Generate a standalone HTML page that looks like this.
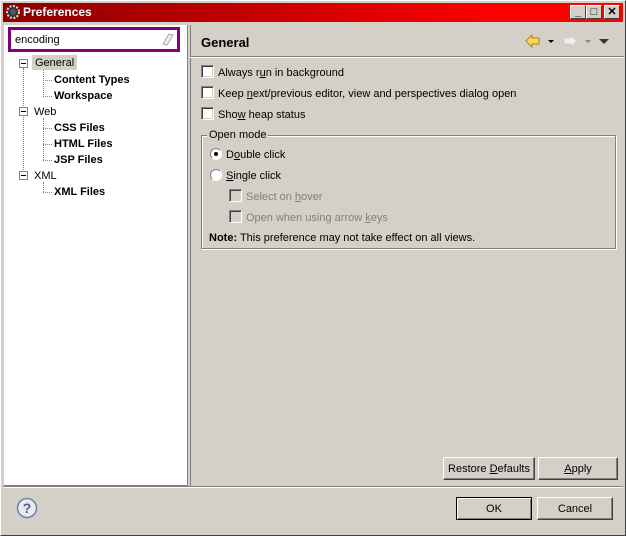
<!DOCTYPE html>
<html><head><style>
*{margin:0;padding:0;box-sizing:border-box}
body{width:626px;height:536px;background:#d4d0c8;font-family:"Liberation Sans",sans-serif;font-size:11px;color:#000;position:relative;overflow:hidden}
.a{position:absolute}
.win{left:0;top:0;width:626px;height:536px;border:1px solid #fff;border-right-color:#404040;border-bottom-color:#404040;outline:1px solid #d4d0c8}
.title{left:3px;top:3px;width:620px;height:19px;background:linear-gradient(to right,#8a0000,#ff0000 80%,#ff0000);color:#fff;font-weight:bold;font-size:12px;line-height:19px;padding-left:20px}
.tb{top:5px;width:16px;height:14px;background:#d4d0c8;border:1px solid #fff;border-right-color:#404040;border-bottom-color:#404040;font-size:11px;line-height:12px;text-align:center;font-weight:bold;color:#000}
.left{left:4px;top:25px;width:184px;height:461px;background:#fff;border-right:1px solid #808080;border-bottom:1px solid #808080}
.srch{left:8px;top:27px;width:172px;height:25px;border:3px solid #800080;background:#fff;padding:4px 0 0 4px;font-size:11px}
.t{position:absolute;white-space:nowrap;padding-top:2px}
.b{font-weight:bold}
.pm{position:absolute;width:9px;height:9px;border:1px solid #808080;background:#fff}
.pm:after{content:"";position:absolute;left:1px;top:3px;width:5px;height:1px;background:#000}
.dv{position:absolute;border-left:1px dotted #808080}
.dh{position:absolute;border-top:1px dotted #808080}
.cb{position:absolute;width:13px;height:13px;background:#fff;border:1px solid #808080;border-right-color:#fff;border-bottom-color:#fff;box-shadow:inset 1px 1px 0 #404040,inset -1px -1px 0 #d4d0c8}
.cb.dis{background:#d4d0c8}
.rb{position:absolute;width:12px;height:12px;border-radius:50%;background:#fff;border:1px solid #808080;border-right-color:#fff;border-bottom-color:#fff}
.dis{color:#808080}
.btn{position:absolute;height:23px;background:#d4d0c8;border:1px solid #fff;border-right-color:#404040;border-bottom-color:#404040;box-shadow:inset -1px -1px 0 #808080;text-align:center;line-height:22px}
u{text-decoration:underline}
</style></head><body>
<div class="a win"></div>
<div class="a title">Preferences</div>
<svg class="a" style="left:5px;top:4px" width="16" height="16"><circle cx="8" cy="8" r="6" fill="#333" stroke="#ddd" stroke-width="2" stroke-dasharray="2 1.5"/><circle cx="8" cy="8" r="3" fill="#556"/></svg>
<div class="a tb" style="left:570px">_</div>
<div class="a tb" style="left:586px">□</div>
<div class="a tb" style="left:604px">✕</div>

<div class="a left"></div>
<div class="a srch">encoding</div>
<svg class="a" style="left:160px;top:32px" width="14" height="14"><path d="M3 12 L9 2 L13 3 L7 13 Z" fill="#eee" stroke="#aaa"/></svg>

<div class="dv" style="left:23px;top:68px;height:108px"></div>
<div class="pm" style="left:19px;top:59px"></div>
<div class="t" style="left:32px;top:55px;background:#d4d0c8;padding:2px 3px 1px">General</div>
<div class="dv" style="left:43px;top:70px;height:25px"></div>
<div class="dh" style="left:43px;top:80px;width:9px"></div>
<div class="dh" style="left:43px;top:96px;width:9px"></div>
<div class="t b" style="left:54px;top:72px">Content Types</div>
<div class="t b" style="left:54px;top:88px">Workspace</div>
<div class="pm" style="left:19px;top:107px"></div>
<div class="t" style="left:34px;top:104px">Web</div>
<div class="dv" style="left:43px;top:118px;height:42px"></div>
<div class="dh" style="left:43px;top:128px;width:9px"></div>
<div class="dh" style="left:43px;top:144px;width:9px"></div>
<div class="dh" style="left:43px;top:160px;width:9px"></div>
<div class="t b" style="left:54px;top:120px">CSS Files</div>
<div class="t b" style="left:54px;top:136px">HTML Files</div>
<div class="t b" style="left:54px;top:152px">JSP Files</div>
<div class="pm" style="left:19px;top:171px"></div>
<div class="t" style="left:34px;top:168px">XML</div>
<div class="dv" style="left:43px;top:182px;height:10px"></div>
<div class="dh" style="left:43px;top:192px;width:9px"></div>
<div class="t b" style="left:54px;top:184px">XML Files</div>

<div class="a" style="left:190px;top:25px;width:1px;height:461px;background:#808080"></div>
<div class="t b" style="left:201px;top:33px;font-size:13px">General</div>
<svg class="a" style="left:524px;top:33px" width="90" height="16">
<path d="M2 8 L8 2 L8 5 L15 5 L15 11 L8 11 L8 14 Z" fill="#f8d860" stroke="#c08000"/>
<path d="M24 7 h6 l-3 3z" fill="#000"/>
<path d="M53 8 L47 2 L47 5 L40 5 L40 11 L47 11 L47 14 Z" fill="#eee" stroke="#ccc"/>
<path d="M61 7 h6 l-3 3z" fill="#888"/>
<path d="M75 6 h10 l-5 5z" fill="#334"/>
</svg>
<div class="a" style="left:190px;top:56px;width:434px;height:1px;background:#808080;border-bottom:1px solid #fff;height:2px"></div>

<div class="cb" style="left:201px;top:65px"></div><div class="t" style="left:218px;top:65px">Always r<u>u</u>n in background</div>
<div class="cb" style="left:201px;top:86px"></div><div class="t" style="left:218px;top:86px">Keep <u>n</u>ext/previous editor, view and perspectives dialog open</div>
<div class="cb" style="left:201px;top:107px"></div><div class="t" style="left:218px;top:107px">Sho<u>w</u> heap status</div>

<div class="a" style="left:201px;top:135px;width:415px;height:114px;border:1px solid #808080;box-shadow:1px 1px 0 #fff,inset 1px 1px 0 #fff"></div>
<div class="t" style="left:207px;top:127px;background:#d4d0c8;padding:2px 2px 0">Open mode</div>
<div class="rb" style="left:210px;top:148px"><div style="position:absolute;left:3px;top:3px;width:4px;height:4px;background:#000;border-radius:50%"></div></div>
<div class="t" style="left:226px;top:147px">D<u>o</u>uble click</div>
<div class="rb" style="left:210px;top:169px"></div>
<div class="t" style="left:226px;top:168px"><u>S</u>ingle click</div>
<div class="cb dis" style="left:229px;top:189px"></div><div class="t dis" style="left:246px;top:189px">Select on <u>h</u>over</div>
<div class="cb dis" style="left:229px;top:210px"></div><div class="t dis" style="left:246px;top:210px">Open when using arrow <u>k</u>eys</div>
<div class="t" style="left:209px;top:230px"><b>Note:</b> This preference may not take effect on all views.</div>

<div class="btn" style="left:443px;top:457px;width:92px">Restore <u>D</u>efaults</div>
<div class="btn" style="left:538px;top:457px;width:80px"><u>A</u>pply</div>

<div class="a" style="left:3px;top:486px;width:620px;height:2px;border-top:1px solid #808080;border-bottom:1px solid #fff"></div>
<svg class="a" style="left:16px;top:497px" width="22" height="22"><circle cx="11" cy="11" r="9.5" fill="#e8eaf0" stroke="#7080a0" stroke-width="1.5"/><text x="11" y="16" text-anchor="middle" font-family="Liberation Sans" font-weight="bold" font-size="14" fill="#506080">?</text></svg>
<div class="btn" style="left:456px;top:497px;width:76px;border:1px solid #000;box-shadow:inset 1px 1px 0 #fff,inset -1px -1px 0 #808080">OK</div>
<div class="btn" style="left:537px;top:497px;width:76px">Cancel</div>
</body></html>
